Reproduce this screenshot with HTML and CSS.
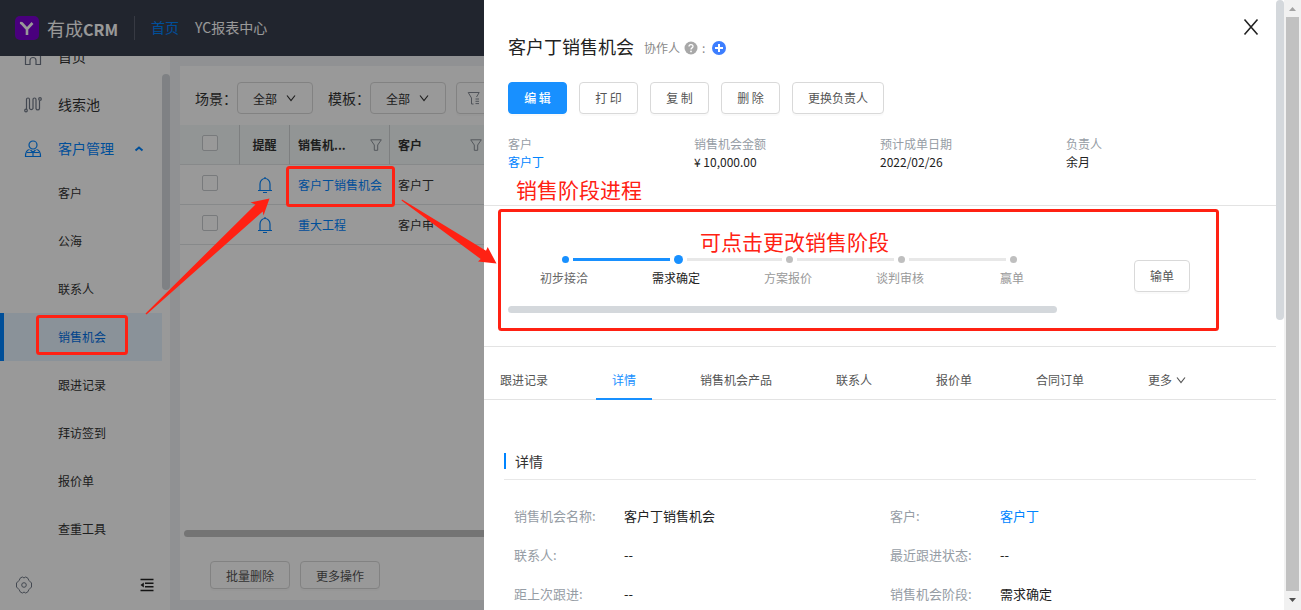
FILE: index.html
```html
<!DOCTYPE html>
<html lang="zh-CN">
<head>
<meta charset="utf-8">
<title>有成CRM</title>
<link rel="stylesheet" href="styles.css">
</head>
<body>
<svg class="defs" aria-hidden="true">
  <symbol id="bell" viewBox="0 0 16 18"><path d="M1 14.5h14M3 14.5V8a5 5.5 0 0 1 10 0v6.5M8 1v1.5M6 16.5h4" fill="none" stroke="currentColor" stroke-width="1.2"/></symbol>
  <symbol id="funnel" viewBox="0 0 12 12"><path d="M.7.8h10.6L7.7 6v5.3H4.3V6z" fill="none" stroke="currentColor" stroke-linejoin="round"/></symbol>
  <symbol id="chevron" viewBox="0 0 10 10"><path d="M1 2.5l4 5 4-5" fill="none" stroke="currentColor" stroke-width="1.2"/></symbol>
</svg>
<div class="window">
  <div class="app">
    <header class="topbar">
      <a class="brand" href="#">
        <svg class="brand-logo" viewBox="0 0 24 24" aria-hidden="true"><rect width="24" height="24" rx="5" fill="#7b00d0"/><path d="M6.5 7l5.5 6 5.500-6M12 12.500V19" fill="none" stroke="#fff" stroke-width="2.600"/><circle cx="6" cy="7" r="1.200" fill="#fff"/></svg>
        <span>有成<b>CRM</b></span>
      </a>
      <nav class="topnav">
        <a class="is-active" href="#">首页</a>
        <a href="#">YC报表中心</a>
      </nav>
    </header>
    <div class="body">
      <aside class="sidebar">
        <div class="menu-wrap">
          <ul class="menu">
            <li><a class="menu-item" href="#"><svg viewBox="0 0 18 18"><path d="M1.500 6v10.500h4.500v-4a3 3 0 0 1 6 0v4h4.500V6L9 1z"/></svg>首页</a></li>
            <li><a class="menu-item" href="#"><svg viewBox="0 0 18 18"><path d="M2.500 13V3.500a1.500 1.500 0 0 1 3 0v9a2 2 0 0 0 3.500 0v-9a1.500 1.500 0 0 1 3 0v9a1.800 1.800 0 0 0 3.500 0V5"/><circle cx="2" cy="14.500" r="1.300"/><circle cx="16" cy="3" r="1.300"/></svg>线索池</a></li>
            <li><a class="menu-item is-open" href="#"><svg viewBox="0 0 18 18"><circle cx="9" cy="5" r="4"/><path d="M5.500 9.500C2.500 10 1.500 12 1.500 16.500h15c0-4.500-1-6.500-4-7M3 12.500h12M9 11v5.500M6.500 10L9 12.500l2.500-2.500"/></svg>客户管理<svg class="caret" viewBox="0 0 10 10"><path d="M1.500 6.500L5 3.500l3.500 3"/></svg></a></li>
          </ul>
          <ul class="submenu">
            <li><a href="#">客户</a></li>
            <li><a href="#">公海</a></li>
            <li><a href="#">联系人</a></li>
            <li><a class="is-active" href="#">销售机会</a></li>
            <li><a href="#">跟进记录</a></li>
            <li><a href="#">拜访签到</a></li>
            <li><a href="#">报价单</a></li>
            <li><a href="#">查重工具</a></li>
          </ul>
          <div class="menu-thumb"></div>
        </div>
        <div class="sidebar-foot">
          <button type="button" aria-label="设置"><svg viewBox="0 0 18 18"><path d="M5.500 1.800L7.500 1 9 2l1.500-1 2 .8 1.500 2.700 2.500 2.500v4L14 13.500l-1.500 2.700-2 .8L9 16l-1.500 1-2-.8L4 13.500 1.500 11V7L4 4.500z" fill="none" stroke="#717987"/><circle cx="9" cy="9" r="2.300" fill="none" stroke="#717987"/></svg></button>
          <button type="button" aria-label="收起菜单"><svg class="fold" viewBox="0 0 14 14"><path d="M.5 1.500h13M5 5.200h8.500M5 8.800h8.500M.5 12.500h13" stroke="#222" stroke-width="1.500"/><path d="M.5 7L3.800 4.500v5z" fill="#222"/></svg></button>
        </div>
      </aside>
      <main class="content">
        <section class="card">
          <div class="toolbar">
            <label for="scene">场景：</label>
            <span class="select"><select id="scene"><option>全部</option></select><svg><use href="#chevron"/></svg></span>
            <label for="tpl">模板：</label>
            <span class="select"><select id="tpl"><option>全部</option></select><svg><use href="#chevron"/></svg></span>
            <button class="btn filter-btn" type="button" aria-label="筛选"><svg viewBox="0 0 14 14"><path d="M6.500 13H4.500V7L1.200 1.500h11L9.500 6M8.500 8H12M8.500 10.300H12M8.500 12.600H12" fill="none" stroke="#858b94"/></svg></button>
          </div>
          <table class="grid">
            <colgroup><col class="c-check"><col class="c-remind"><col class="c-name"><col class="c-cust"><col></colgroup>
            <thead>
              <tr>
                <th><input type="checkbox" aria-label="全选"></th>
                <th>提醒</th>
                <th><span class="th">销售机...<svg><use href="#funnel"/></svg></span></th>
                <th><span class="th">客户<svg><use href="#funnel"/></svg></span></th>
                <th></th>
              </tr>
            </thead>
            <tbody>
              <tr><td><input type="checkbox" aria-label="选择客户丁销售机会"></td><td><svg class="bell"><use href="#bell"/></svg></td><td><a href="#">客户丁销售机会</a></td><td>客户丁</td><td></td></tr>
              <tr><td><input type="checkbox" aria-label="选择重大工程"></td><td><svg class="bell"><use href="#bell"/></svg></td><td><a href="#">重大工程</a></td><td>客户申</td><td></td></tr>
            </tbody>
          </table>
          <div class="card-foot">
            <div class="hbar"></div>
            <div class="bulk">
              <button class="btn small" type="button">批量删除</button>
              <button class="btn small" type="button">更多操作</button>
            </div>
          </div>
        </section>
      </main>
    </div>
    <div class="mask"></div>

    <section class="drawer" role="dialog" aria-labelledby="drawer-title">
      <div class="drawer-main">
        <div class="summary">
          <button class="close" type="button" aria-label="关闭"><svg viewBox="0 0 16 18"><path d="M1.500 1.500l13 15M14.500 1.500l-13 15" stroke="#222" stroke-width="1.600"/></svg></button>
          <div class="title-row">
            <h1 id="drawer-title">客户丁销售机会</h1>
            <span class="collab">协作人
              <svg viewBox="0 0 14 14" aria-hidden="true"><circle cx="7" cy="7" r="6.500" fill="#a8a8a8"/><path d="M5 5.600C5 3 9 3 9 5.400 9 7 7 6.800 7 8.600" fill="none" stroke="#fff" stroke-width="1.300"/><circle cx="7" cy="10.400" r=".9" fill="#fff"/></svg>
              <span>:</span>
              <button class="add" type="button" aria-label="添加协作人"><svg viewBox="0 0 14 14"><circle cx="7" cy="7" r="7" fill="#3d7eff"/><path d="M7 3v8M3 7h8" stroke="#fff" stroke-width="2"/></svg></button>
            </span>
          </div>
          <div class="actions">
            <button class="btn primary" type="button">编 辑</button>
            <button class="btn" type="button">打 印</button>
            <button class="btn" type="button">复 制</button>
            <button class="btn" type="button">删 除</button>
            <button class="btn" type="button">更换负责人</button>
          </div>
          <dl class="facts">
            <div><dt>客户</dt><dd><a href="#">客户丁</a></dd></div>
            <div><dt>销售机会金额</dt><dd>¥ 10,000.00</dd></div>
            <div><dt>预计成单日期</dt><dd>2022/02/26</dd></div>
            <div><dt>负责人</dt><dd>余月</dd></div>
          </dl>
        </div>
        <div class="stages">
          <div class="stage-scroll">
            <ol class="steps">
              <li><button class="step done" type="button"><span class="track"><i></i></span>初步接洽</button></li>
              <li><button class="step current" type="button"><span class="track"><i></i></span>需求确定</button></li>
              <li><button class="step" type="button"><span class="track"><i></i></span>方案报价</button></li>
              <li><button class="step" type="button"><span class="track"><i></i></span>谈判审核</button></li>
              <li><button class="step" type="button"><span class="track"><i></i></span>赢单</button></li>
            </ol>
            <div class="stage-bar"></div>
          </div>
          <button class="btn" type="button">输单</button>
        </div>
        <nav class="tabs">
          <a href="#">跟进记录</a>
          <a class="is-active" href="#">详情</a>
          <a href="#">销售机会产品</a>
          <a href="#">联系人</a>
          <a href="#">报价单</a>
          <a href="#">合同订单</a>
          <a href="#">更多<svg><use href="#chevron"/></svg></a>
        </nav>
        <section class="detail">
          <h2><span>详情</span></h2>
          <dl class="fields">
            <div><dt>销售机会名称:</dt><dd>客户丁销售机会</dd></div>
            <div><dt>客户:</dt><dd><a href="#">客户丁</a></dd></div>
            <div><dt>联系人:</dt><dd>--</dd></div>
            <div><dt>最近跟进状态:</dt><dd>--</dd></div>
            <div><dt>距上次跟进:</dt><dd>--</dd></div>
            <div><dt>销售机会阶段:</dt><dd>需求确定</dd></div>
          </dl>
        </section>
      </div>
      <div class="drawer-bar"><div></div></div>
    </section>
  </div>
  <div class="page-bar">
    <svg viewBox="0 0 17 17"><path d="M5 11l3.500-4 3.500 4z" fill="#a3a3a3"/></svg>
    <div></div>
    <svg viewBox="0 0 17 17"><path d="M5 7l3.500 4L12 7z" fill="#505050"/></svg>
  </div>
</div>

<div class="notes">
  <svg class="marks" viewBox="0 0 1301 610" aria-hidden="true">
    <g fill="none" stroke="#ff2113" stroke-width="3">
      <rect x="37.500" y="316.500" width="89" height="37" rx="2"/>
      <rect x="287.500" y="167.500" width="106" height="38" rx="2"/>
      <rect x="499.500" y="210.500" width="718" height="119" rx="2"/>
    </g>
    <g fill="#ff2113">
      <path d="M145.500 313.500L255.500 204.500 250.500 202.500 269.500 198.500 263.500 215.500 262.700 211.500 146.500 314.500z"/>
      <path d="M402 199.500L486 250.700 487.700 247 496.500 263.500 478 261.500 480.700 259 401.500 200.500z"/>
    </g>
  </svg>
  <p class="note note-progress">销售阶段进程</p>
  <p class="note note-change">可点击更改销售阶段</p>
</div>
</body>
</html>
```
FILE: styles.css
```css
* { box-sizing: border-box; }
body, h1, h2, p, dl, dd, ul, ol { margin: 0; padding: 0; }
ul, ol { list-style: none; }
a { color: #0084ff; text-decoration: none; }
body, button, select {
  font-family: "Noto Sans CJK SC", "Liberation Sans", sans-serif;
  font-size: 12px;
  color: #333;
}
body { height: 100vh; overflow: hidden; line-height: 18px; }
button { cursor: pointer; }
.defs { position: absolute; width: 0; height: 0; }

.window { display: grid; grid-template-columns: minmax(0, 1fr) 17px; height: 100%; }
.app { position: relative; display: flex; flex-direction: column; min-height: 0; overflow: hidden; }
.mask { position: absolute; inset: 0; background: rgba(0, 0, 0, .4); }

/* Top bar */
.topbar { display: flex; align-items: center; flex: none; height: 56px; padding-left: 15px; background: #383e4d; }
.brand { display: flex; align-items: center; gap: 8px; font-size: 18px; color: #fff; padding-right: 16px; border-right: 1px solid #5c6270; line-height: 20px; }
.brand b { font-size: 16px; }
.brand-logo { width: 24px; height: 24px; }
.topnav { display: flex; gap: 16px; padding: 0 0 2px 16px; font-size: 14px; }
.topnav a { color: #fff; }
.topnav .is-active { color: #0084ff; }

/* Sidebar */
.body { display: flex; flex: 1; min-height: 0; }
.sidebar { display: flex; flex-direction: column; flex: none; width: 170px; background: #fff; }
.menu-wrap { position: relative; flex: 1; min-height: 0; overflow: hidden; }
.menu { margin-top: -24px; padding-bottom: 1px; }
.menu-item { display: flex; align-items: center; gap: 16px; height: 48px; padding-left: 24px; font-size: 14px; color: #333; }
.menu-item svg { width: 18px; height: 18px; margin-top: 2px; fill: none; stroke: #717987; stroke-width: 1.2; }
.menu-item.is-open { height: 40px; color: #0084ff; }
.menu-item.is-open svg { stroke: #0084ff; }
.menu-item .caret { width: 10px; height: 10px; margin-left: 4px; stroke-width: 2; }
.submenu a { display: flex; align-items: center; height: 48px; margin-right: 8px; padding-left: 58px; color: #333; }
.submenu .is-active { padding-left: 54px; border-left: 4px solid #0084ff; background: #e6f4ff; color: #0070e8; }
.menu-thumb { position: absolute; top: 18px; right: 0; width: 8px; height: 216px; border-radius: 4px; background: #d4d8dc; }
.sidebar-foot { display: flex; justify-content: space-between; align-items: center; height: 50px; padding: 0 16px 0 15px; }
.sidebar-foot button { display: flex; padding: 0; border: 0; background: none; }
.sidebar-foot svg { width: 18px; height: 18px; }
.sidebar-foot .fold { width: 14px; height: 14px; }

/* List page */
.content { display: flex; flex: 1; min-width: 0; padding: 10px; background: #f0f2f5; }
.card { display: flex; flex-direction: column; flex: 1; min-width: 0; background: #fff; }
.toolbar { display: flex; align-items: center; height: 59px; padding: 5px 0 0 15px; font-size: 14px; }
.select { position: relative; display: flex; width: 76px; margin-right: 15px; }
.select select { width: 100%; height: 32px; padding: 0 15px; border: 1px solid #d9d9d9; border-radius: 4px; background: #fff; appearance: none; }
.select svg { position: absolute; top: 11px; right: 17px; width: 10px; height: 10px; pointer-events: none; }
.toolbar label { width: 42px; white-space: nowrap; }
.select + .btn { margin-left: -5px; }
.toolbar .filter-btn { padding: 0 10px; }
.filter-btn svg { display: block; width: 14px; height: 14px; }
.grid { width: 100%; table-layout: fixed; border-collapse: separate; border-spacing: 0; }
.c-check { width: 60px; }
.c-remind { width: 50px; }
.c-name, .c-cust { width: 100px; }
.grid th, .grid td { height: 40px; padding: 0 7px 0 8px; border-bottom: 1px solid #e2e4e6; text-align: left; white-space: nowrap; }
.grid th { background: #f4f9f8; border-right: 1px solid #d0d4d6; font-weight: 700; }
.grid th:first-child, .grid td:first-child, .grid th:nth-child(2), .grid td:nth-child(2) { padding: 0; text-align: center; }
.grid input { display: block; appearance: none; width: 16px; height: 16px; margin: -4px auto 0; border: 1px solid #c8cccf; border-radius: 2px; background: #fff; }
.th { display: flex; align-items: center; justify-content: space-between; }
.th svg { width: 12px; height: 12px; color: #8a9099; }
.bell { display: block; width: 16px; height: 18px; margin: 0 auto; color: #0084ff; }
.card-foot { margin-top: auto; padding-left: 4px; }
.hbar { height: 7px; border-radius: 4px; background: #c1c1c1; }
.bulk { display: flex; gap: 10px; padding: 24px 0 11px 26px; }

.btn { min-width: 59px; height: 32px; padding: 0 15px 1px; border: 1px solid #d9d9d9; border-radius: 4px; background: #fff; color: #555; white-space: nowrap; box-shadow: 0 2px 0 rgba(0, 0, 0, .02); }
.btn.small { height: 28px; padding-bottom: 0; }
.btn.primary { border-color: #1890ff; background: #1890ff; color: #fff; font-weight: 500; }

/* Drawer */
.drawer { position: absolute; top: 0; right: 0; bottom: 0; display: flex; width: 800px; background: #fff; }
.drawer-main { flex: 1; min-width: 0; overflow: hidden; }
.drawer-bar { width: 8px; }
.drawer-bar div { height: 320px; border-radius: 4px; background: #d4d8dc; }
.summary { position: relative; height: 206px; padding: 35px 24px 0; border-bottom: 1px solid #e3e3e3; }
.close { position: absolute; top: 18px; right: 17px; display: flex; padding: 0; border: 0; background: none; }
.close svg { width: 16px; height: 18px; }
.title-row { display: flex; align-items: center; gap: 10px; height: 22px; }
h1 { font-size: 18px; font-weight: 400; line-height: 22px; color: #222; }
.collab { display: flex; align-items: center; gap: 4px; color: #888; padding-top: 4px; }
.collab svg { display: block; width: 14px; height: 14px; }
.add { padding: 0; margin-left: 3px; border: 0; background: none; }
.actions { display: flex; gap: 12px; padding-top: 25px; }
.facts { display: grid; grid-template-columns: repeat(4, 1fr); padding-top: 21px; }
.facts dt { color: #969da5; }
.facts dd { color: #222; }

.stages { display: flex; align-items: center; justify-content: space-between; height: 141px; padding: 0 86px 0 24px; border-bottom: 1px solid #e3e3e3; }
.stages > .btn { min-width: 56px; }
.stage-scroll { width: 560px; padding-top: 14px; }
.steps { display: grid; grid-template-columns: repeat(5, 1fr); }
.step { display: block; width: 100%; height: 36px; padding: 0; border: 0; background: none; color: #999; text-align: center; line-height: 18px; }
.track { display: flex; align-items: center; gap: 4px; height: 9px; margin-bottom: 5px; }
.track::before, .track::after { content: ""; flex: 1; height: 3px; background: #e8e8e8; }
.track::before { flex: none; width: calc(50% - 6px); }
.track i { width: 7px; height: 7px; border-radius: 50%; background: #bfbfbf; }
.done { color: #666; }
.current { color: #222; }
.done i, .current i, .done .track::after, .current .track::before { background: #1890ff; }
.current i { width: 9px; height: 9px; }
li:first-child .track::before, li:last-child .track::after { background: none; }
.stage-bar { width: 549px; height: 7px; margin-top: 17px; border-radius: 4px; background: #d4d8dc; }

.tabs { display: flex; gap: 32px; height: 53px; border-bottom: 1px solid #e3e3e3; }
.tabs a { display: flex; align-items: center; gap: 4px; height: 53px; padding: 14px 16px 0; border-bottom: 2px solid transparent; color: #555; white-space: nowrap; }
.tabs .is-active { border-color: #1890ff; color: #1890ff; }
.tabs svg { width: 10px; height: 10px; }

.detail { padding: 44px 20px 0; }
h2 { padding: 9px 0 10px; border-bottom: 1px solid #e8e8e8; font-size: 14px; font-weight: 400; line-height: 16px; }
h2 span { display: block; padding-left: 9px; border-left: 2px solid #0084ff; }
.fields { display: grid; grid-template-columns: 1fr 1fr; padding-top: 16px; font-size: 13px; line-height: 39px; }
.fields div { display: flex; padding-left: 10px; }
.fields dt { width: 110px; color: #969da5; }
.fields dd { color: #222; }

/* Browser scrollbar */
.page-bar { display: flex; flex-direction: column; padding-bottom: 2px; background: #f1f1f1; }
.page-bar div { flex: 1; margin: 0 2px; background: #c1c1c1; }
.page-bar svg { width: 17px; height: 17px; }

/* Annotations */
.notes { position: absolute; top: 0; left: 0; pointer-events: none; }
.marks { display: block; width: 1301px; height: 610px; }
.note { position: absolute; font-size: 21px; line-height: 26px; color: #ff2113; white-space: nowrap; }
.note-progress { top: 176px; left: 516px; }
.note-change { top: 228px; left: 700px; }
```
